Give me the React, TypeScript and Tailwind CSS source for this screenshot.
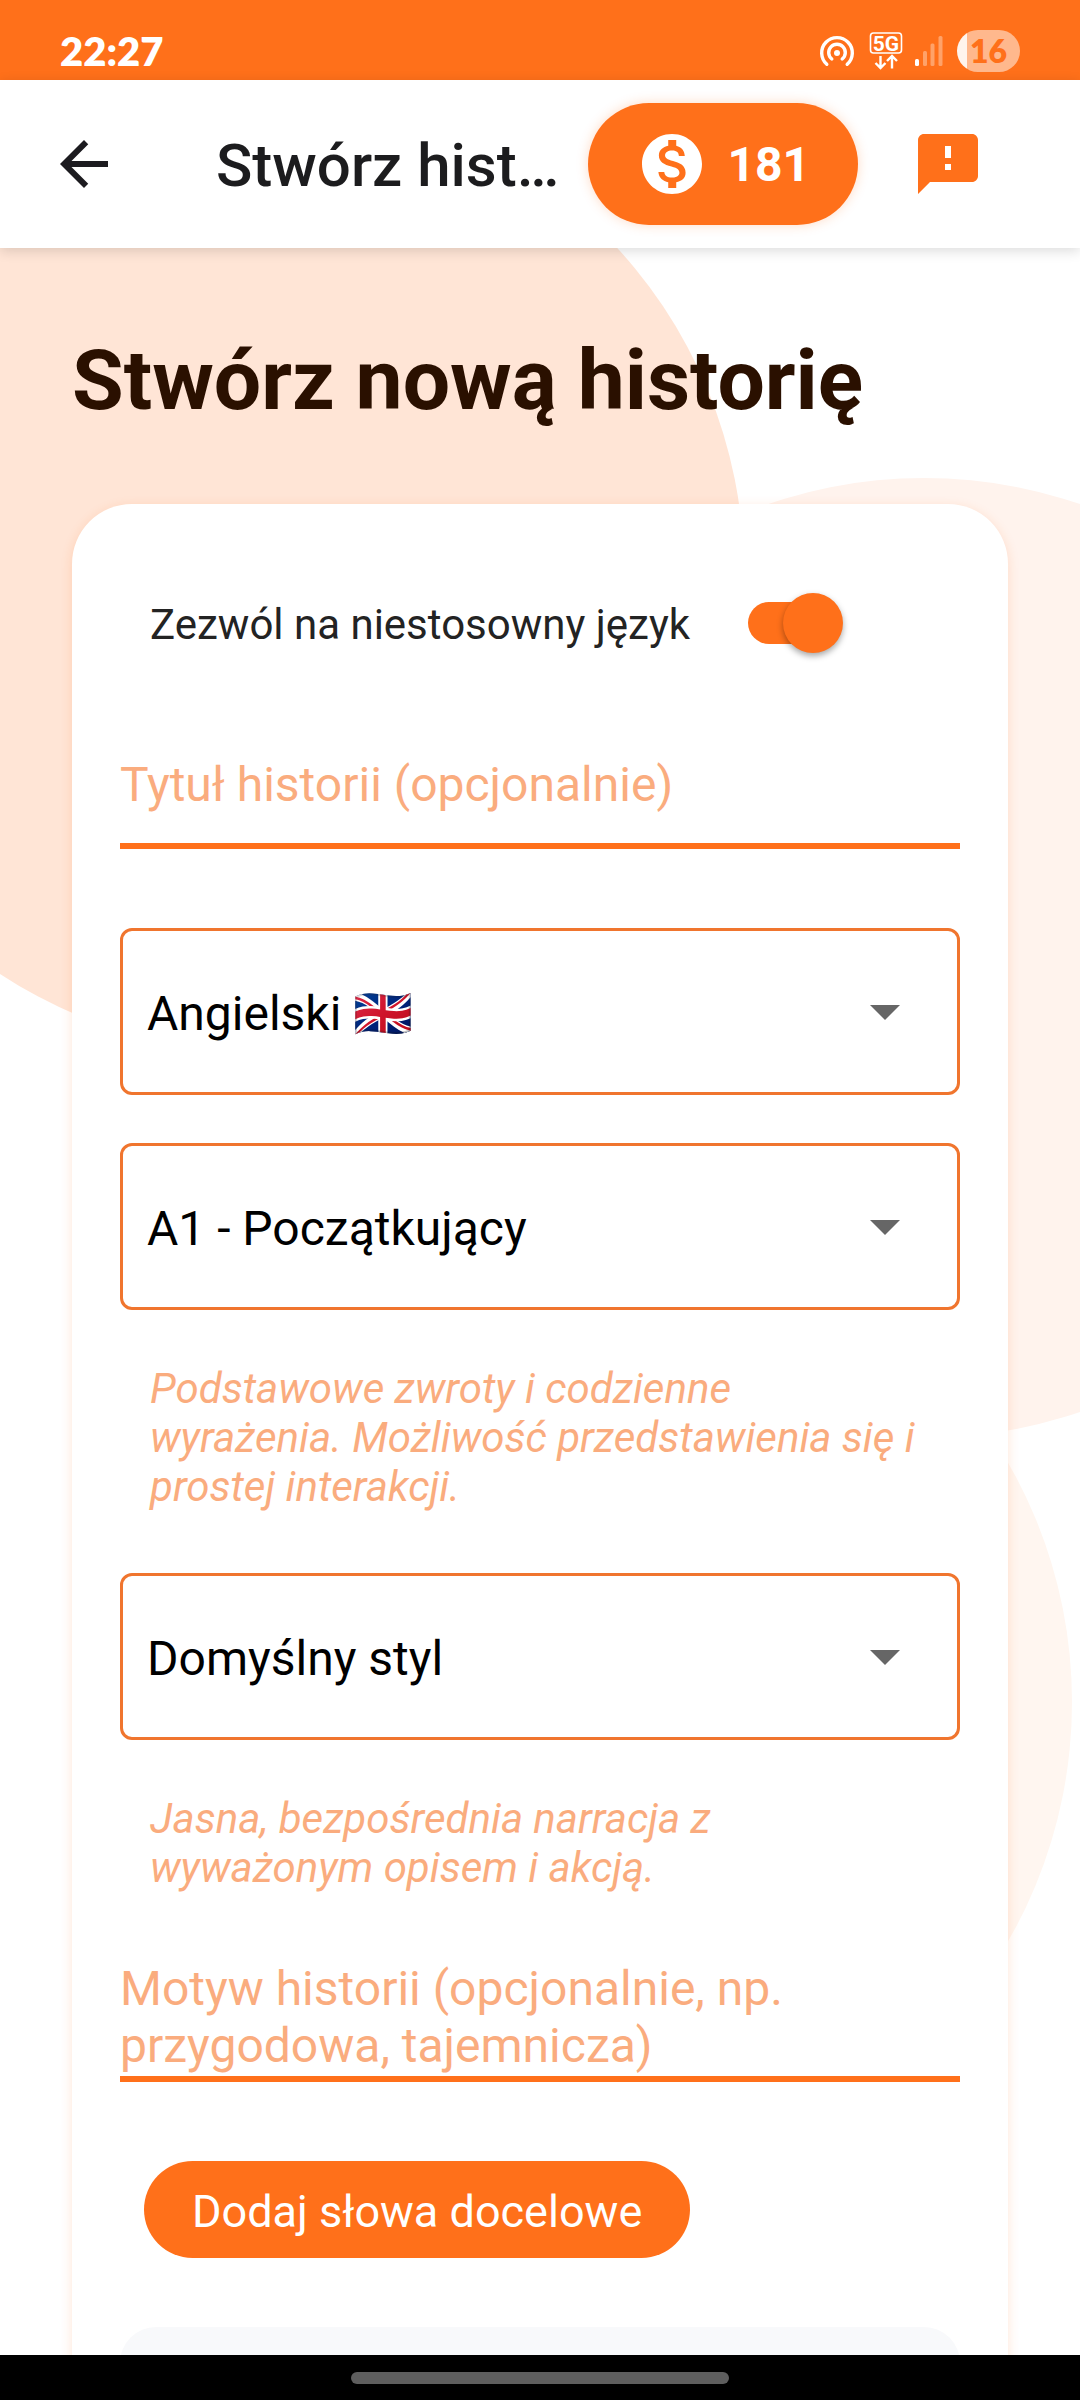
import { useState } from "react";
import type { ReactNode } from "react";
import { MdArrowBack, MdFeedback, MdMonetizationOn } from "react-icons/md";

function StatusBar() {
  return (
    <div className="flex h-20 shrink-0 items-center justify-between bg-[#ff701a] px-15 pt-[22px] text-white">
      <span className="font-[Lato,sans-serif] text-[40px] leading-none font-extrabold">22:27</span>
      <div className="flex items-center">
        <svg className="mr-[14px] h-9 w-9" viewBox="0 0 36 36" fill="none" stroke="currentColor" strokeWidth="3.4" strokeLinecap="round">
          <path d="M7.8 31.3A15.3 15.3 0 1 1 28.2 31.3" />
          <path d="M12.8 26A8.3 8.3 0 1 1 23.2 26" />
          <circle cx="18" cy="20" r="3" fill="currentColor" stroke="none" />
        </svg>
        <svg className="mr-3 h-[38px] w-[34px]" viewBox="0 0 34 38" fill="none" stroke="currentColor" strokeWidth="2">
          <rect x="1.5" y="1" width="31" height="20" rx="3" strokeWidth="1.6" />
          <text x="17" y="18.5" textAnchor="middle" fontSize="21" fontWeight="700" fontFamily="Roboto, sans-serif" fill="currentColor" stroke="none">
            5G
          </text>
          <path d="M11.5 24V35.5M6.5 31L11.5 36L16.5 31M23 36.5V24.5M18 29L23 24L28 29" strokeWidth="2.4" />
        </svg>
        <svg className="mr-[14px] h-[30px] w-7" viewBox="0 0 28 30" fill="currentColor">
          <rect x="0" y="23" width="4" height="7" rx="1.5" />
          <rect x="8" y="15" width="4" height="15" rx="1.5" opacity="0.35" />
          <rect x="15.5" y="7.5" width="4" height="22.5" rx="1.5" opacity="0.35" />
          <rect x="23.5" y="0" width="4" height="30" rx="1.5" opacity="0.35" />
        </svg>
        <div className="flex h-[42px] w-[63px] items-center justify-center rounded-full bg-[linear-gradient(to_right,#fff4ed_10px,#ffb88d_10px)] font-[Lato,sans-serif] text-[32px] leading-none font-extrabold text-[#ff701a]">
          16
        </div>
      </div>
    </div>
  );
}

function AppBar() {
  return (
    <header className="relative z-10 flex h-[168px] shrink-0 items-center bg-white pr-24 pl-12 shadow-[0_3px_12px_rgba(0,0,0,0.14)]">
      <button type="button" aria-label="Wstecz" className="mr-24 shrink-0 text-[#1c1b1f]">
        <MdArrowBack size={72} />
      </button>
      <span className="mr-6 min-w-0 flex-1 pt-1 text-[60px] leading-[72px] font-medium whitespace-nowrap text-[#1c1c1e]">
        Stwórz hist…
      </span>
      <button
        type="button"
        className="mr-[54px] flex h-[122px] shrink-0 items-center gap-[19px] rounded-full bg-[#ff701a] px-12 text-5xl font-bold text-white shadow-[0_0_12px_rgba(255,112,26,0.25)]"
      >
        <MdMonetizationOn size={72} />
        <span className="pt-0.5">181</span>
      </button>
      <button type="button" aria-label="Opinia" className="shrink-0 text-[#ff701a]">
        <MdFeedback size={72} />
      </button>
    </header>
  );
}

function Backdrop() {
  return (
    <div aria-hidden="true" className="pointer-events-none absolute inset-0 overflow-hidden">
      <div className="absolute -top-[155px] -left-[20%] size-[960px] rounded-full bg-[#ffe5d6]" />
      <div className="absolute top-[230px] -right-[30%] size-[960px] rounded-full bg-[#fff3ed]" />
      <div className="absolute top-[974px] right-2 size-[960px] rounded-full bg-[#fff6f0]" />
    </div>
  );
}

function SelectField({ label, className, children }: { label: string; className: string; children: ReactNode }) {
  return (
    <div className={`relative ${className}`}>
      <select
        aria-label={label}
        className="block h-[167px] w-full appearance-none rounded-xl border-3 border-[#f0752e] bg-white pt-1 pl-6 text-5xl leading-[64px] text-black"
      >
        {children}
      </select>
      <svg className="pointer-events-none absolute top-[77px] right-[60px] h-[15px] w-[30px]" viewBox="0 0 30 15" fill="#666">
        <path d="M0 0H30L15 15Z" />
      </svg>
    </div>
  );
}

function Hint({ children }: { children: ReactNode }) {
  return <p className="mx-[30px] mt-[54px] text-[42px] leading-[49px] text-[#faac7e] italic">{children}</p>;
}

export default function App() {
  const [allowed, setAllowed] = useState(true);

  return (
    <div className="flex h-screen flex-col bg-white font-[Roboto,sans-serif]">
      <StatusBar />
      <AppBar />
      <div className="relative min-h-0 flex-1">
        <Backdrop />
        <main className="relative h-full overflow-y-auto px-[72px] pt-[84px] [scrollbar-width:none]">
          <h1 className="text-[84px] leading-[98px] font-bold text-[#2a1000]">Stwórz nową historię</h1>
          <form className="mt-[74px] rounded-[60px] bg-white px-12 pt-[89px] pb-12 shadow-[0_3px_12px_rgba(255,112,26,0.18)]">
            <label className="ml-[30px] flex h-15 items-center gap-[58px] text-[42px] leading-[49px] text-[#232323]">
              <span className="pt-0.5">Zezwól na niestosowny język</span>
              <input
                type="checkbox"
                role="switch"
                checked={allowed}
                onChange={(e) => setAllowed(e.target.checked)}
                className="relative h-[42px] w-[94px] appearance-none rounded-full bg-[#ff701a] before:absolute before:-top-[9px] before:left-0 before:size-15 before:rounded-full before:bg-[#ff701a] before:shadow-[0_3px_6px_rgba(0,0,0,0.35)] checked:before:left-[35px]"
              />
            </label>

            <input
              type="text"
              aria-label="Tytuł historii"
              placeholder="Tytuł historii (opcjonalnie)"
              className="mt-[74px] block h-[122px] w-full border-b-6 border-[#ff701a] pb-0.5 text-5xl text-black outline-none placeholder:text-[#faac7e]"
            />

            <SelectField label="Język" className="mt-[79px]">
              <option>Angielski 🇬🇧</option>
            </SelectField>

            <SelectField label="Poziom" className="mt-12">
              <option>A1 - Początkujący</option>
            </SelectField>
            <Hint>Podstawowe zwroty i codzienne wyrażenia. Możliwość przedstawienia się i prostej interakcji.</Hint>

            <SelectField label="Styl" className="mt-[62px]">
              <option>Domyślny styl</option>
            </SelectField>
            <Hint>Jasna, bezpośrednia narracja z wyważonym opisem i akcją.</Hint>

            <textarea
              rows={2}
              aria-label="Motyw historii"
              placeholder="Motyw historii (opcjonalnie, np. przygodowa, tajemnicza)"
              className="mt-[68px] block w-full resize-none overflow-hidden border-b-6 border-[#ff701a] pb-0.5 text-5xl leading-[57px] text-black outline-none placeholder:text-[#faac7e]"
            />

            <button
              type="button"
              className="mt-[79px] ml-6 block h-[97px] rounded-full bg-[#ff701a] px-12 pt-1 text-[45px] leading-[53px] text-white"
            >
              Dodaj słowa docelowe
            </button>

            <div className="mt-[69px] h-60 rounded-[36px] bg-[#f8f9fb]" />
          </form>
        </main>
      </div>
      <div className="flex h-[45px] shrink-0 items-center justify-center bg-black">
        <div className="h-3 w-[35%] rounded-full bg-[#5e5e5e]" />
      </div>
    </div>
  );
}
